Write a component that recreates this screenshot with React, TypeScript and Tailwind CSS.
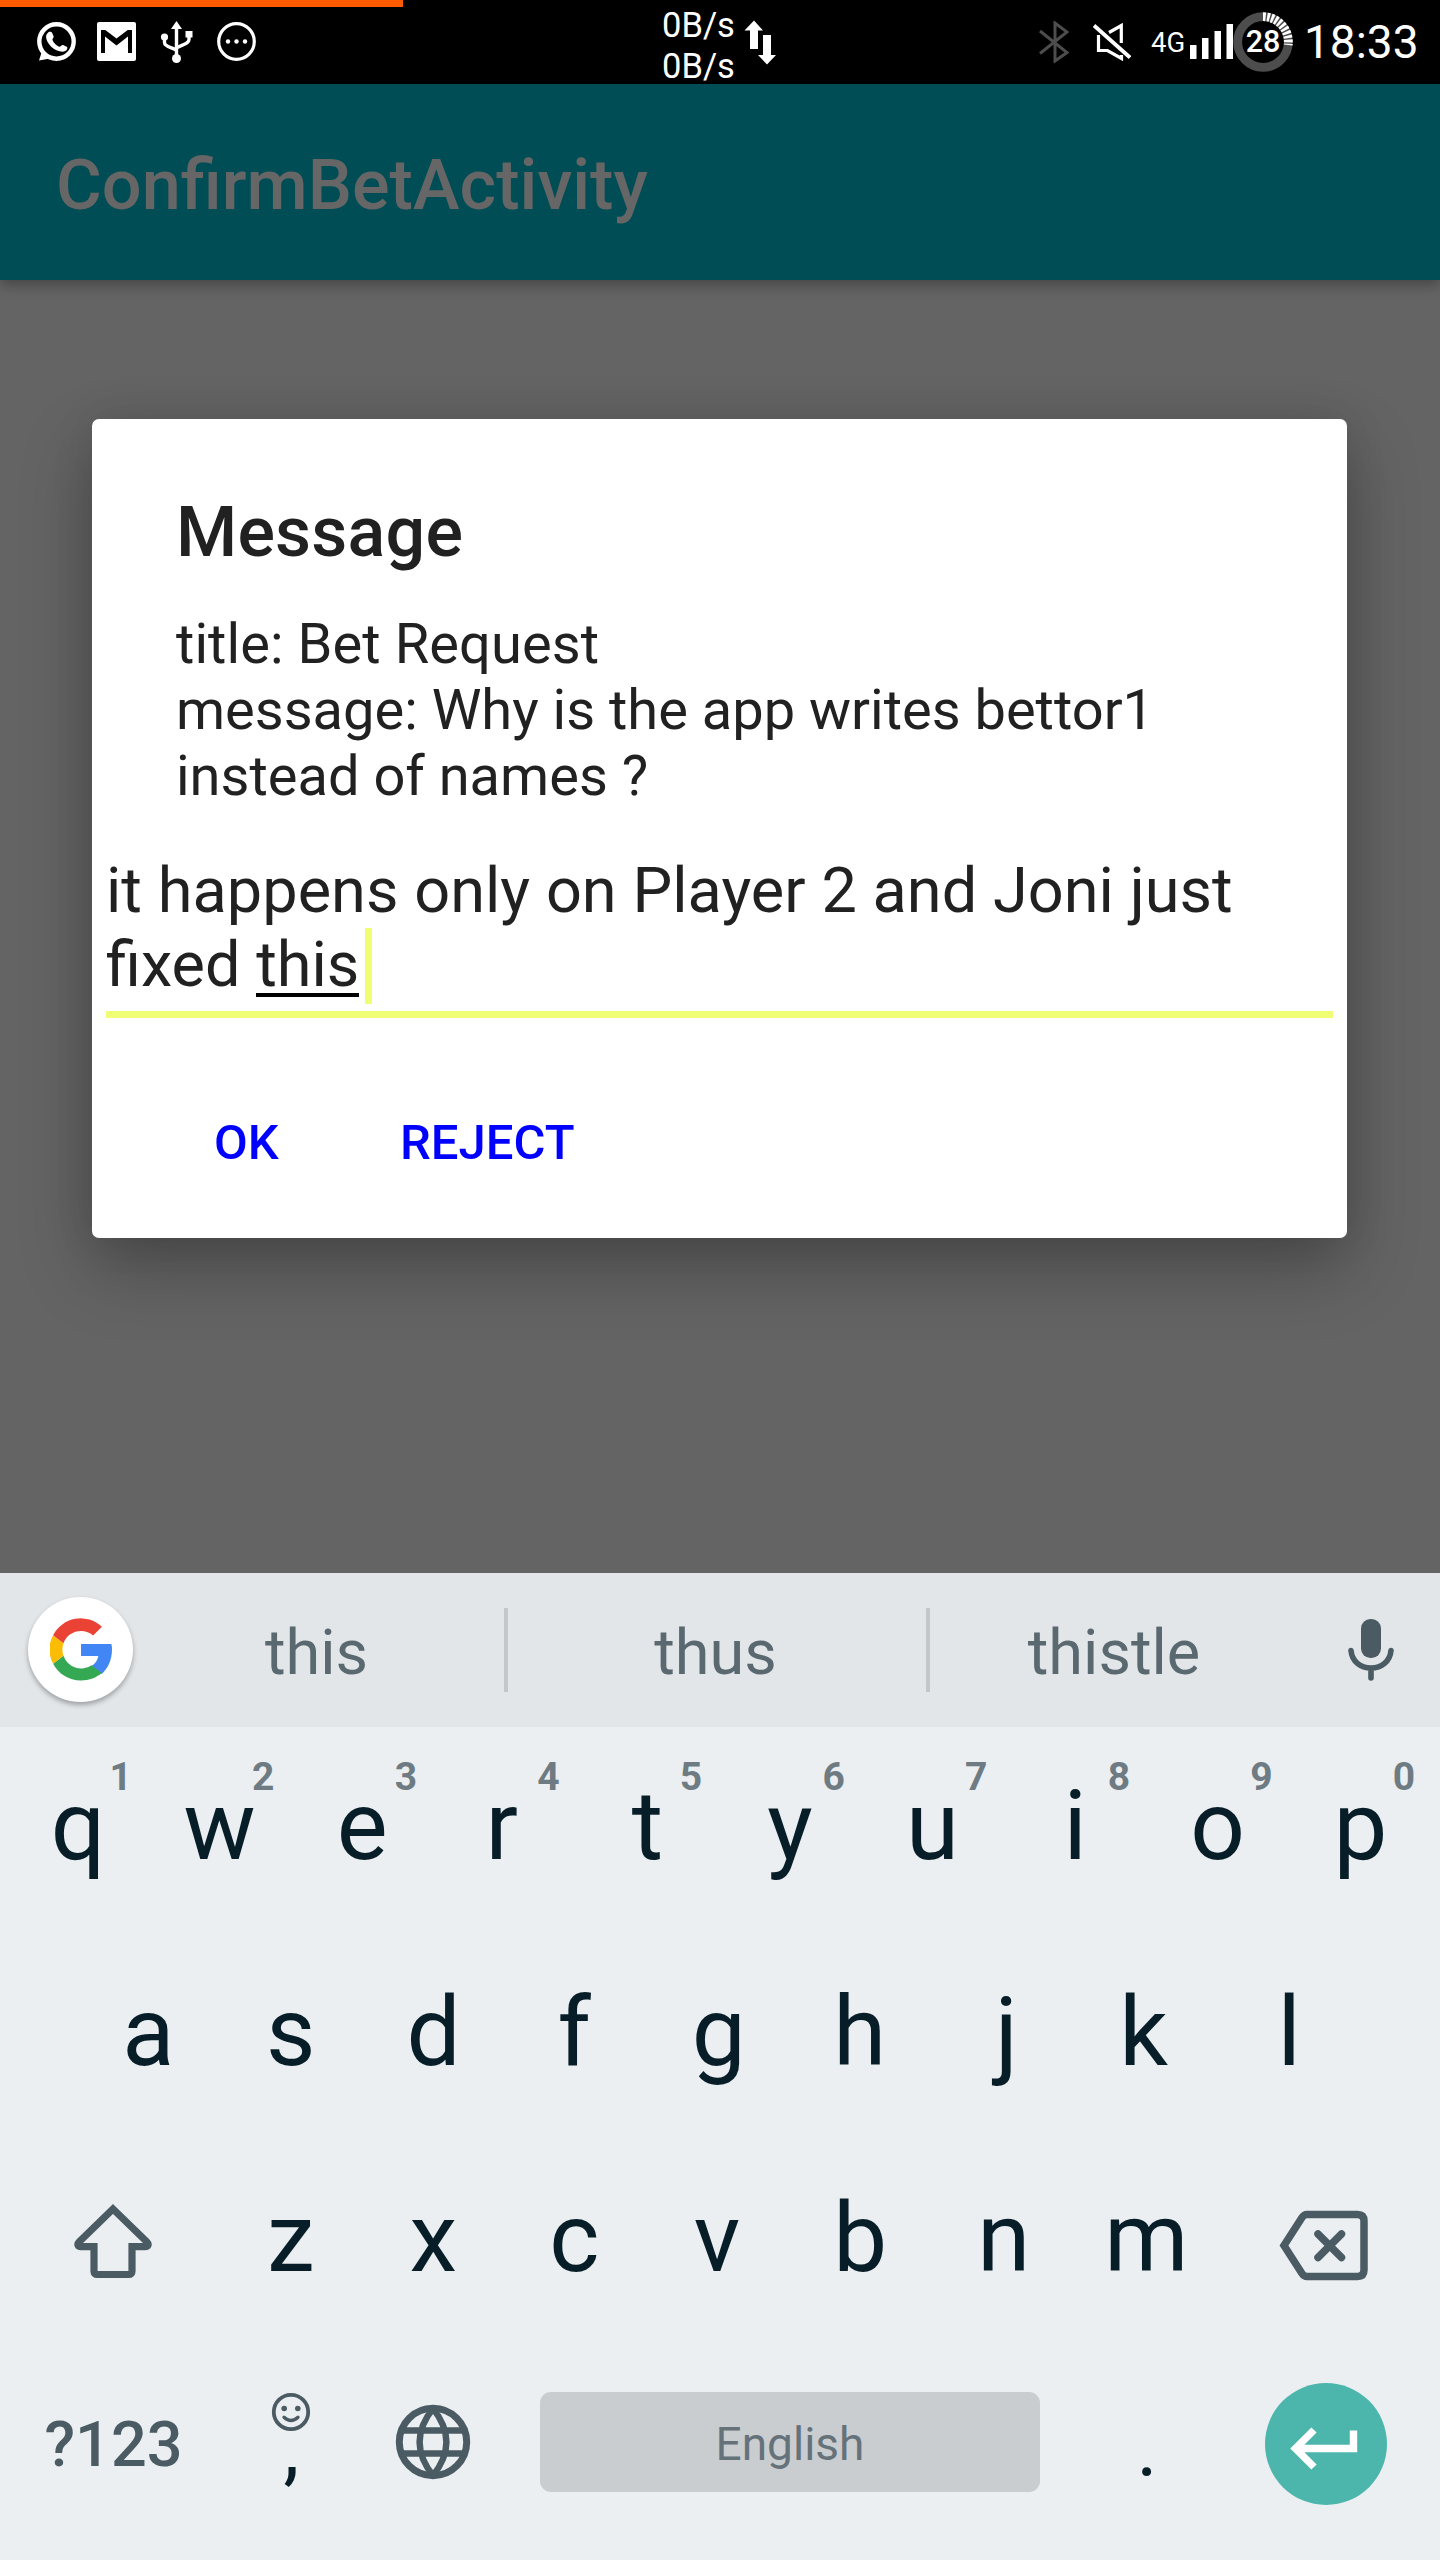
import React from "react";

const ROBOTO = "font-['Roboto',sans-serif]";

function WhatsAppIcon() {
  return (
    <svg className="h-[40px] w-[40px]" viewBox="0 0 40 40" fill="none">
      <circle cx="19.500" cy="19.500" r="17.200" stroke="#fff" strokeWidth="4.400" />
      <path d="M5 29 2 38.500 13 36.500Z" fill="#fff" />
      <path d="M10.500 11.200c1.500-2 3.900-1.800 4.700-.2l1.400 3.300c.5 1.300-1.600 2.500-1.100 3.800 1.300 3.200 3.600 5.400 6.600 6.600 1.400.5 2.600-2 4-1.600l3.600 1.600c1.800 1-.2 5-4 5-8.500 0-16.600-8.500-16.600-15 0-1.500.6-2.700 1.400-3.500Z" fill="#fff" />
    </svg>
  );
}

function GmailIcon() {
  return (
    <svg className="h-[40px] w-[40px]" viewBox="0 0 40 40">
      <rect x="0" y="0" width="39" height="39" rx="2" fill="#fff" />
      <path d="M4 8h4.300L19.500 16.500 30.700 8H35v23H31V14.500L19.500 23.500 8 14.500V31H4Z" fill="#000" />
    </svg>
  );
}

function UsbIcon() {
  return (
    <svg className="h-[42px] w-[34px]" viewBox="0 0 34 42" fill="none">
      <path d="M16.500 5v33M4.500 16v5.500c0 5 10 5 12 8M29 14v4.500c0 5-8 5-12.500 8.500" stroke="#fff" strokeWidth="3.400" />
      <path d="M16.500 0 22 8H11Z" fill="#fff" />
      <circle cx="4.500" cy="16" r="3.600" fill="#fff" />
      <rect x="25.500" y="10" width="7" height="6.500" fill="#fff" />
      <circle cx="16.500" cy="37.500" r="4.500" fill="#fff" />
    </svg>
  );
}

function MoreIcon() {
  return (
    <svg className="h-[40px] w-[40px]" viewBox="0 0 40 40" fill="#fff">
      <circle cx="19.500" cy="19.500" r="17.800" fill="none" stroke="#fff" strokeWidth="3.200" />
      <circle cx="11" cy="19.500" r="2.200" />
      <circle cx="19.500" cy="19.500" r="2.200" />
      <circle cx="28" cy="19.500" r="2.200" />
    </svg>
  );
}

function TrafficIcon() {
  return (
    <svg className="h-[45px] w-[32px]" viewBox="0 0 32 45" fill="#fff">
      <path d="M10 0.500 19 10.500H14V29H6V10.500H0.500Z" />
      <path d="M19 15h8v20h5L23 44.500 14 35h5Z" />
    </svg>
  );
}

function BluetoothIcon() {
  return (
    <svg className="h-[42px] w-[30px]" viewBox="0 0 30 42" fill="none" stroke="#4d4d4d" strokeWidth="3">
      <path d="M1 10 28 31.500 16 40V2L28 11 1 32.500" />
    </svg>
  );
}

function MuteIcon() {
  return (
    <svg className="h-[38px] w-[38px]" viewBox="0 0 38 38" fill="none" stroke="#fff" strokeWidth="3.200">
      <path d="M1 2.500 37 34.500" strokeWidth="3.800" />
      <path d="M16 9.500 28.300 2.500V20M5.500 12v15.500h9L28.500 35.500V32" />
    </svg>
  );
}

function SignalIcon() {
  return (
    <svg className="h-[36px] w-[43px]" viewBox="0 0 43 36" fill="#fff">
      <path d="M0 22h6.500v14H0zM12 15h6.500v21H12zM24.500 8H31v28h-6.500zM36.500 1H43v35h-6.500z" />
    </svg>
  );
}

function BatteryRing() {
  return (
    <div className="relative flex h-[60px] w-[60px] items-center justify-center">
      <svg className="absolute inset-0" viewBox="0 0 60 60" fill="none">
        <circle cx="30" cy="30" r="25.300" stroke="#4d4d4d" strokeWidth="8.800" />
        <path d="M30 4.700A25.300 25.300 0 0 1 55.200 33" stroke="#fff" strokeWidth="8.800" strokeDasharray="2.700 1.450" />
      </svg>
      <span className="relative text-[30.500px] font-medium leading-none text-white">28</span>
    </div>
  );
}

function StatusBar() {
  return (
    <div className="relative flex h-[84px] bg-black text-white">
      <div className="absolute left-0 top-0 h-[7px] w-[403px] bg-[#ff5c00]" />
      <div className="flex w-[662px] items-center pl-[37px]">
        <WhatsAppIcon />
        <div className="ml-[20px]"><GmailIcon /></div>
        <div className="ml-[23px]"><UsbIcon /></div>
        <div className="ml-[23px]"><MoreIcon /></div>
      </div>
      <div className="flex w-[375px]">
        <div className="w-[82px] pt-[5px] text-[34.500px] leading-[41px]">
          <div>0B/s</div>
          <div>0B/s</div>
        </div>
        <div className="pt-[20px]"><TrafficIcon /></div>
      </div>
      <div className="flex">
        <div className="mt-[21px] ml-[2px]"><BluetoothIcon /></div>
        <div className="ml-[24px] mt-[23px]"><MuteIcon /></div>
        <div className="ml-[20px] mt-[26px] w-[39px] text-[27.500px] leading-[33px]">4G</div>
        <div className="mt-[23px]"><SignalIcon /></div>
        <div className="mt-[12px]"><BatteryRing /></div>
        <div className="ml-[11px] mt-[15px] text-[46px] leading-[54px]">18:33</div>
      </div>
    </div>
  );
}

function Dialog() {
  return (
    <div className="mx-[92px] mt-[139px] h-[819px] w-[1255px] rounded-[7px] bg-white text-[#212121] shadow-[0_30px_70px_rgba(0,0,0,0.28),0_0_40px_rgba(0,0,0,0.1)]">
      <h2 className="pl-[84px] pt-[72px] text-[70px] font-medium leading-[82px] tracking-[0.2px]">Message</h2>
      <div className="pl-[84px] pt-[38px] text-[56px] leading-[66px]">
        <div className="tracking-[0.08px]">title: Bet Request</div>
        <div>message: Why is the app writes bettor1</div>
        <div>instead of names ?</div>
      </div>
      <div className="mx-[14px] mt-[45px] h-[164px] border-b-[7px] border-[#f0fe74] text-[63px] leading-[74px]">
        <div className="tracking-[0.05px]">it happens only on Player 2 and Joni just</div>
        <div className="flex">
          <span className="whitespace-pre">fixed </span>
          <span className="relative">
            this
            <span className="absolute bottom-[7px] left-0 h-[4px] w-full bg-black" />
          </span>
          <span className="ml-[6px] h-[76px] w-[7px] bg-[#f0fe74]" />
        </div>
      </div>
      <div className="flex pl-[122px] pt-[96px] text-[49px] font-medium leading-[58px] text-[#0000ff]">
        <span className="w-[186px]">OK</span>
        <span>REJECT</span>
      </div>
    </div>
  );
}

function GoogleButton() {
  return (
    <div className="mb-px flex h-[105px] w-[105px] items-center justify-center rounded-full bg-white shadow-[0_3px_5px_rgba(0,0,0,0.3)]">
      <svg className="mb-px h-[63px] w-[62px]" viewBox="4 4 40 40">
        <path fill="#4285F4" d="M43.600 20.500H24v7.700h11.200c-.5 2.700-2 5-4.300 6.500l6.500 5.100C41.200 36.300 44 30.800 44 24c0-1.200-.1-2.400-.4-3.500Z" />
        <path fill="#34A853" d="M24 44c5.400 0 9.900-1.800 13.400-4.800l-6.500-5.100A12 12 0 0 1 12.700 28L6 33.200C9.300 39.600 16.100 44 24 44Z" />
        <path fill="#FBBC05" d="M12.700 28a12 12 0 0 1 0-8L6 14.800a20 20 0 0 0 0 18.400Z" />
        <path fill="#EA4335" d="M24 12c3 0 5.700 1 7.800 3l5.700-5.700A20 20 0 0 0 6 14.800L12.700 20A12 12 0 0 1 24 12Z" />
      </svg>
    </div>
  );
}

function MicIcon() {
  return (
    <svg className="h-[62px] w-[46px]" viewBox="0 0 46 62" fill="none">
      <rect x="13" y="0" width="20" height="39" rx="9.500" fill="#4b5b63" />
      <path d="M3 31.500c1 11 9.500 17.500 20 17.500s19-6.500 20-17.500M23 50v9" stroke="#4b5b63" strokeWidth="5.600" strokeLinecap="round" />
    </svg>
  );
}

function Suggestions() {
  return (
    <div className="flex h-[154px] items-center bg-[#e2e6e9] pl-[28px] text-[63px] text-[#5a6870]">
      <GoogleButton />
      <div className="ml-[-4px] w-[375px] pt-[6px] text-center">this</div>
      <div className="h-[84px] w-[4px] bg-[#c2c7ca]" />
      <div className="w-[418px] pr-[3px] pt-[6px] text-center">thus</div>
      <div className="h-[84px] w-[4px] bg-[#c2c7ca]" />
      <div className="w-[368px] pt-[6px] text-center">thistle</div>
      <div className="ml-[50px]"><MicIcon /></div>
    </div>
  );
}

const NUDGE: Record<string, string> = {
  r: "pr-[6px]",
  k: "pr-[6px]",
  f: "pr-[4px]",
  c: "pr-[3px]",
  v: "pr-[3px]",
  h: "pr-[3px]",
  b: "pr-[2px]",
  j: "pl-[5px]",
  q: "pl-[2px]",
};

function Key({ label, hint }: { label: string; hint?: string }) {
  return (
    <div className={`relative w-[142.600px] text-center ${NUDGE[label] ?? ""}`}>
      {label}
      {hint && (
        <span className="absolute left-[103px] top-[-16px] w-[24px] text-[39px] font-bold leading-[46px] text-[#6e7b82]">
          {hint}
        </span>
      )}
    </div>
  );
}

function ShiftIcon() {
  return (
    <svg className="h-[76px] w-[80px]" viewBox="0 0 80 76" fill="none" stroke="#4b5b63" strokeWidth="7.200">
      <path d="M40 6 73.500 38.500C76.500 41.500 75 43.700 72 43.700H59V68q0 3.500-3.500 3.500H24.500Q21 71.500 21 68V43.700H8C5 43.700 3.500 41.500 6.500 38.500Z" />
    </svg>
  );
}

function BackspaceIcon() {
  return (
    <svg className="h-[71px] w-[90px]" viewBox="0 0 90 71" fill="none" stroke="#4b5b63" strokeWidth="7.500">
      <path d="M28 4.500H78.500Q85 4.500 85 11V60Q85 66.500 78.500 66.500H28Q25 66.500 23 63.500L5 35.500 23 7.500Q25 4.500 28 4.500Z" />
      <path d="M39 24 62.500 47.500M62.500 24 39 47.500" strokeLinecap="round" />
    </svg>
  );
}

function SmileyIcon() {
  return (
    <svg className="h-[40px] w-[40px]" viewBox="0 0 40 40" fill="none" stroke="#4b5b63">
      <circle cx="20" cy="20" r="17.200" strokeWidth="3.800" />
      <circle cx="13.200" cy="16.500" r="2.800" fill="#4b5b63" stroke="none" />
      <circle cx="26.800" cy="16.500" r="2.800" fill="#4b5b63" stroke="none" />
      <path d="M13 25.200q7 6.600 14 0" strokeWidth="3.300" strokeLinecap="round" />
    </svg>
  );
}

function GlobeIcon() {
  return (
    <svg className="h-[76px] w-[76px]" viewBox="0 0 76 76" fill="none" stroke="#4b5b63">
      <circle cx="38" cy="38" r="33.700" strokeWidth="7" />
      <path d="M6 26.500H70M6 49.500H70M38 4.500C20 27 20 49 38 71.500M38 4.500C56 27 56 49 38 71.500" strokeWidth="6.300" />
    </svg>
  );
}

function EnterButton() {
  return (
    <div className="flex h-[122px] w-[122px] items-center justify-center rounded-full bg-[#4db6ac]">
      <svg className="ml-[-3px] mt-[7px] h-[44px] w-[68px]" viewBox="0 0 68 44" fill="none" stroke="#fff" strokeWidth="7.400">
        <path d="M63.500 4.500V22.500H6M24 4 5.500 22.500 24 41" />
      </svg>
    </div>
  );
}

function Keyboard() {
  return (
    <div className="relative flex h-[987px] flex-col bg-[#ebeff2] text-[#071e28]">
      <Suggestions />
      <div className="text-[96px] leading-[112px]">
        <div className="flex h-[206px] pl-[5.700px] pt-[43px]">
          {"qwertyuiop".split("").map((c, i) => (
            <Key key={c} label={c} hint={"1234567890"[i]} />
          ))}
        </div>
        <div className="flex h-[206px] pl-[77px] pt-[43px]">
          {"asdfghjkl".split("").map((c) => (
            <Key key={c} label={c} />
          ))}
        </div>
        <div className="flex h-[206px] pt-[43px]">
          <div className="w-[219.500px] pl-[73px] pt-[21px]"><ShiftIcon /></div>
          {"zxcvbnm".split("").map((c) => (
            <Key key={c} label={c} />
          ))}
          <div className="pl-[61px] pt-[28px]"><BackspaceIcon /></div>
        </div>
        <div className="flex h-[206px] pt-[28px]">
          <div className="w-[220px] pl-[7px] pt-[35px] text-center text-[63px] font-medium leading-[74px] text-[#4b5b63]">?123</div>
          <div className="relative w-[142.700px] pt-[29px] text-center text-[80px] leading-[94px]">
            <div className="absolute left-[51px] top-[19px]"><SmileyIcon /></div>
            ,
          </div>
          <div className="w-[177.300px] pl-[32px] pt-[31px]"><GlobeIcon /></div>
          <div className="mt-[19px] flex h-[100px] w-[500px] items-center justify-center rounded-[11px] bg-[#c9cdd0] pt-[4px] text-[46px] text-[#66727a]">English</div>
          <div className="w-[214px] pt-[29px] text-center text-[80px] leading-[94px]">.</div>
          <div className="pl-[11px] pt-[10px]"><EnterButton /></div>
        </div>
      </div>
    </div>
  );
}

export default function App() {
  return (
    <div className={`flex h-[2560px] w-[1440px] flex-col overflow-hidden bg-[#646464] ${ROBOTO}`}>
      <StatusBar />
      <div className="h-[196px] bg-[#004d56] pl-[56px] pt-[60px] text-[70.200px] font-medium leading-[82px] text-[#666] shadow-[0_4px_14px_rgba(0,0,0,0.35)]">
        ConfirmBetActivity
      </div>
      <div className="h-[1293px]">
        <Dialog />
      </div>
      <Keyboard />
    </div>
  );
}
